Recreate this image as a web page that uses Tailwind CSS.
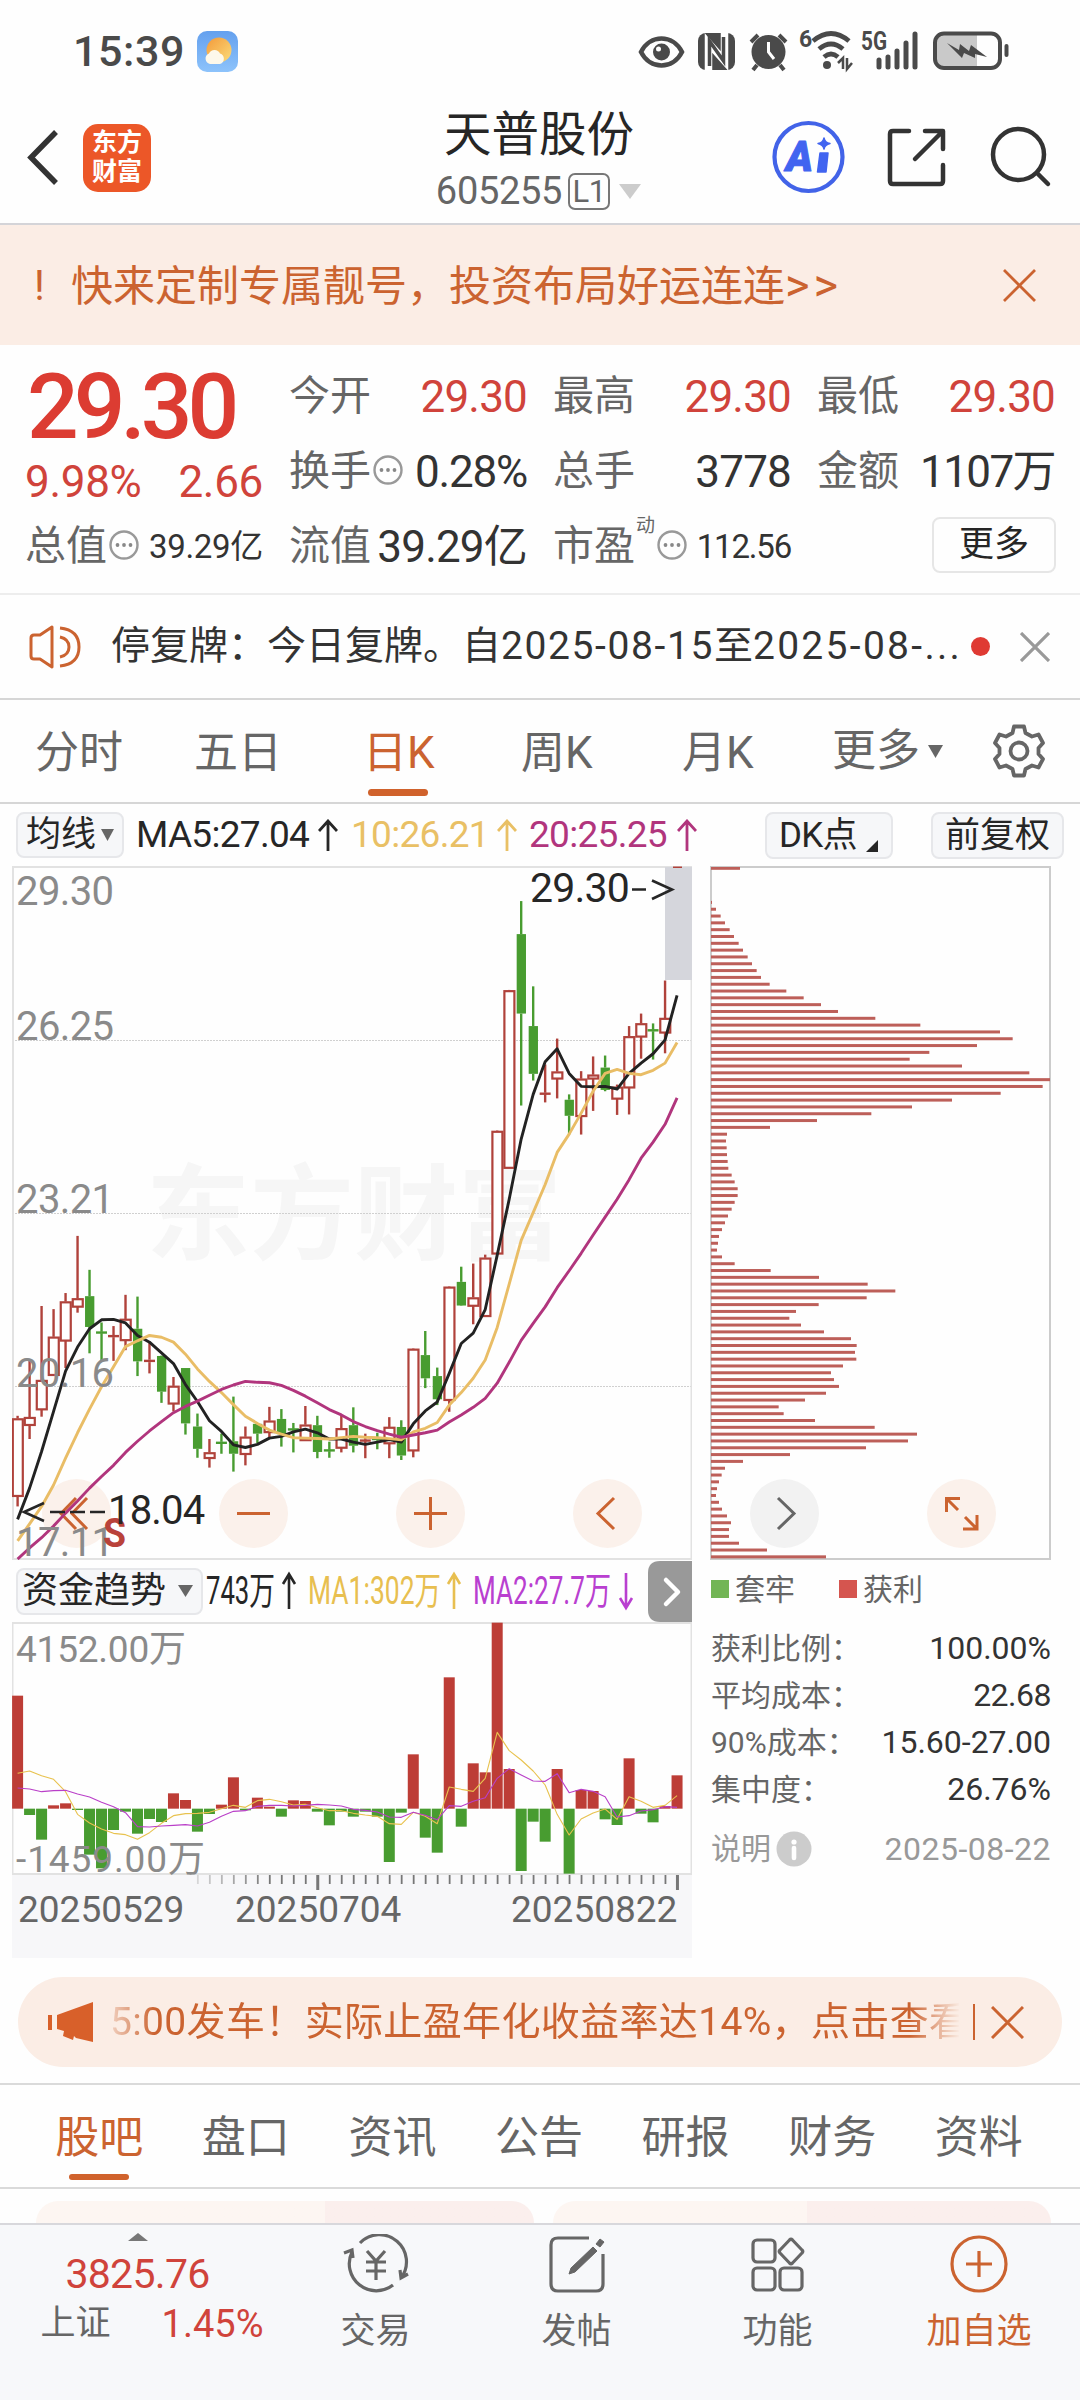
<!DOCTYPE html>
<html lang="zh-CN">

<head>
  <meta charset="UTF-8">
  <meta name="viewport" content="width=device-width, initial-scale=1.0">
  <title>天普股份 605255</title>
  <script src="https://cdn.jsdelivr.net/npm/@tailwindcss/browser@4"></script>
</head>

<body class="bg-white">
  <div class="w-[1080px] h-[2400px] overflow-hidden flex flex-col bg-[#fefefe] text-[#333] whitespace-nowrap font-['Roboto','Noto_Sans_CJK_SC',sans-serif]">

    <!-- Status bar -->
    <div class="h-[104px] shrink-0 flex items-start justify-between pl-[73px] pr-[60px] pt-5">
      <div class="flex items-center h-[62px] gap-[13px]">
        <span class="w-[111px] text-[43px] leading-[62px] font-medium text-[#4a4a4a] tracking-[0.6px]">15:39</span>
        <svg class="w-[41px] h-[41px]" viewBox="0 0 41 41">
          <defs>
            <linearGradient id="sky" x1="0" y1="0" x2="0" y2="1"><stop offset="0" stop-color="#64a0ee"/><stop offset="1" stop-color="#8dc3fb"/></linearGradient>
            <linearGradient id="sun" x1="0" y1="0" x2="1" y2="1"><stop offset="0" stop-color="#f39a3a"/><stop offset="1" stop-color="#fbdc7a"/></linearGradient>
          </defs>
          <rect width="41" height="41" rx="10" fill="url(#sky)"/>
          <circle cx="22" cy="19" r="12.500" fill="url(#sun)"/>
          <path d="M13 33a5.500 5.500 0 0 1-1-10.500 6 6 0 0 1 11 0 5.500 5.500 0 0 1 0 10.500z" fill="#fdf8ea"/>
        </svg>
      </div>
      <svg class="w-[390px] h-[62px]" viewBox="630 20 390 62" fill="none" stroke="#4a4a4a">
        <path d="M641 52C650 34 673 34 682 52C673 70 650 70 641 52Z" stroke-width="4.500"/>
        <circle cx="661.500" cy="52" r="8.500" fill="#4a4a4a" stroke="none"/>
        <circle cx="658.500" cy="49" r="2.500" fill="#fff" stroke="none"/>
        <rect x="698" y="33" width="37" height="37" rx="8" fill="#4a4a4a" stroke="none"/>
        <path d="M708.500 71V43L724.500 61V32" stroke="#fff" stroke-width="7.500"/>
        <path d="M709.500 66V41L723.500 61V37" stroke-width="3.500"/>
        <circle cx="768.500" cy="52" r="17" fill="#4a4a4a" stroke="none"/>
        <path d="M751 42L758 35M786 42L779 35M757 65L753 70M780 65L784 70" stroke-width="4"/>
        <path d="M768.500 42V52L774 59" stroke="#fff" stroke-width="3"/>
        <path d="M813 41Q831 26 849 41M819 49Q831 39 843 49M824 57Q831 51 838 57" stroke-width="4.800"/>
        <circle cx="827" cy="65" r="4" fill="#4a4a4a" stroke="none"/>
        <path d="M838 63L843 58V69M847 58V69L852 63" stroke-width="2.500"/>
        <text x="799" y="47" font-size="23" font-weight="700" fill="#4a4a4a" stroke="none">6</text>
        <text x="861" y="50" font-size="26" font-weight="700" fill="#4a4a4a" stroke="none" textLength="26" lengthAdjust="spacingAndGlyphs">5G</text>
        <path d="M879 60V67M888 57V67M897 51V67M906 43V67M915 34V67" stroke-width="5" stroke-linecap="round"/>
        <path d="M944 34H977V67H944Q936 67 936 59V42Q936 34 944 34Z" fill="#c9c9c9" stroke="none"/>
        <rect x="935" y="33.500" width="65" height="34.500" rx="9" stroke-width="4"/>
        <path d="M947 43L959 50L960 44L969 51L971 45L987 57L975 54L975 58L964 53L962 58Z" fill="#4a4a4a" stroke="none"/>
        <path d="M1006.500 46V55" stroke-width="4" stroke-linecap="round"/>
      </svg>
    </div>

    <!-- Header -->
    <header class="h-[121px] shrink-0 border-b-2 border-[#d4d4d8] flex justify-between">
      <div class="flex w-[330px] pl-[26px] pt-5">
        <svg class="w-8 h-[66px] mr-[25px]" viewBox="0 0 32 66" fill="none" stroke="#333" stroke-width="5.500"><path d="M30 8L5 33.500L30 59"/></svg>
        <div class="size-[68px] rounded-[15px] bg-[#ec5728] text-white text-[25px] leading-[29px] font-bold text-center pt-1">东方<br>财富</div>
      </div>
      <div class="w-[420px] flex flex-col items-center">
        <h1 class="text-[47.5px] leading-[62px] text-[#262626] pr-[2px]">天普股份</h1>
        <div class="flex items-center mt-[5px] pr-[3px] text-[38px] leading-[40px] text-[#666] tracking-[-0.3px]">
          605255
          <span class="w-[42px] h-[37px] ml-[6px] rounded-[7px] border-2 border-[#777] text-[31px] leading-[34px] text-center">L1</span>
          <svg class="w-[22px] h-[15px] ml-[9px]" viewBox="0 0 22 15"><path d="M0 0H22L11 15Z" fill="#ccc"/></svg>
        </div>
      </div>
      <svg class="w-[310px] h-[106px] ml-[20px]" viewBox="770 104 310 106" fill="none" stroke="#333" stroke-width="4.500" stroke-linecap="round" stroke-linejoin="round">
        <circle cx="808.500" cy="157" r="34" stroke="#4263e8" stroke-width="4.200"/>
        <text x="786" y="170.500" font-size="42" font-weight="900" font-style="italic" fill="#4164f0" stroke="#4164f0" stroke-width="1" textLength="27" lengthAdjust="spacingAndGlyphs">A</text>
        <path d="M820 153H828L826 172H817.500Z" fill="#4164f0" stroke="#4164f0" stroke-width="1.500"/>
        <path d="M824 138Q825 143 830 143.500Q825 144.500 824 149Q823 144.500 818 143.500Q823 143 824 138Z" fill="#4164f0" stroke="#4164f0" stroke-width="1.500"/>
        <path d="M909 131H893Q890 131 890 134V181Q890 184 893 184H940Q943 184 943 181V165M925 131H943V149M942 132L915 159"/>
        <circle cx="1018.500" cy="154.500" r="25.500"/><path d="M1038 174L1048 184"/>
      </svg>
    </header>

    <!-- Banner -->
    <div class="h-[120px] shrink-0 bg-[#fbede5] flex items-center pl-[26px] pr-[44px] text-[42px] text-[#cb6330]">
      <span class="w-[45px] pl-[8px]">!</span>
      <span class="flex-1">快来定制专属靓号，投资布局好运连连<span class="tracking-[4px] text-[47px]">&gt;&gt;</span></span>
      <svg class="size-[33px]" viewBox="0 0 33 33" stroke="#cb6330" stroke-width="2.800"><path d="M1 1L32 32M32 1L1 32"/></svg>
    </div>

    <!-- Quote -->
    <section class="h-[250px] shrink-0 border-b-2 border-[#ededed] pl-[25px] pt-[14px] flex gap-[26px] text-[44px] text-[#333] tracking-[-0.8px]">
      <div class="w-[238px]">
        <div class="h-[97px] text-[91px] leading-[97px] font-medium text-[#dc3c32] tracking-[-5px] pl-0.5">29.30</div>
        <div class="h-[53px] leading-[53px] text-[44px] flex justify-between text-[#d0433b] tracking-[-0.3px]"><span>9.98%</span><span>2.66</span></div>
        <div class="h-[75px] flex items-center">
          <span class="text-[41px] text-[#666] tracking-normal">总值</span>
          <svg class="size-[30px] ml-0.5 -mt-1" viewBox="0 0 30 30"><circle cx="15" cy="15" r="13.500" fill="none" stroke="#999" stroke-width="2.400"/><g fill="#888"><circle cx="8.500" cy="15" r="1.900"/><circle cx="15" cy="15" r="1.900"/><circle cx="21.500" cy="15" r="1.900"/></g></svg>
          <span class="ml-auto text-[33px] tracking-[-0.3px]">39.29亿</span>
        </div>
      </div>
      <div class="w-[238px]">
        <div class="h-[75px] flex items-center justify-between"><span class="text-[41px] text-[#666] tracking-normal">今开</span><span class="text-[#d0433b]">29.30</span></div>
        <div class="h-[75px] flex items-center">
          <span class="text-[41px] text-[#666] tracking-normal">换手</span>
          <svg class="size-[30px] ml-0.5 -mt-1" viewBox="0 0 30 30"><circle cx="15" cy="15" r="13.500" fill="none" stroke="#999" stroke-width="2.400"/><g fill="#888"><circle cx="8.500" cy="15" r="1.900"/><circle cx="15" cy="15" r="1.900"/><circle cx="21.500" cy="15" r="1.900"/></g></svg>
          <span class="ml-auto tracking-[-1.2px]">0.28%</span>
        </div>
        <div class="h-[75px] flex items-center justify-between"><span class="text-[41px] text-[#666] tracking-normal">流值</span><span>39.29亿</span></div>
      </div>
      <div class="w-[238px]">
        <div class="h-[75px] flex items-center justify-between"><span class="text-[41px] text-[#666] tracking-normal">最高</span><span class="text-[#d0433b]">29.30</span></div>
        <div class="h-[75px] flex items-center justify-between"><span class="text-[41px] text-[#666] tracking-normal">总手</span><span>3778</span></div>
        <div class="h-[75px] flex items-center">
          <span class="text-[41px] text-[#666] tracking-normal">市盈</span>
          <span class="w-[22px] text-[19px] text-[#666] self-start leading-[34px] pl-px">动</span>
          <svg class="size-[30px] -mt-1" viewBox="0 0 30 30"><circle cx="15" cy="15" r="13.500" fill="none" stroke="#999" stroke-width="2.400"/><g fill="#888"><circle cx="8.500" cy="15" r="1.900"/><circle cx="15" cy="15" r="1.900"/><circle cx="21.500" cy="15" r="1.900"/></g></svg>
          <span class="ml-auto text-[33px] tracking-[-1.2px]">112.56</span>
        </div>
      </div>
      <div class="w-[238px]">
        <div class="h-[75px] flex items-center justify-between"><span class="text-[41px] text-[#666] tracking-normal">最低</span><span class="text-[#d0433b]">29.30</span></div>
        <div class="h-[75px] flex items-center justify-between"><span class="text-[41px] text-[#666] tracking-normal">金额</span><span class="tracking-[-1.600px]">1107万</span></div>
        <div class="h-[75px] flex items-center justify-end -mr-px pb-1"><span class="w-[124px] h-[56px] rounded-lg border-2 border-[#e6e6e6] text-[35px] leading-[52px] text-center text-[#262626] tracking-normal">更多</span></div>
      </div>
    </section>

    <!-- Notice -->
    <div class="h-[105px] shrink-0 border-b-2 border-[#d6d6d6] flex items-center pl-[28px] pr-[30px] text-[39px]">
      <svg class="w-[54px] h-[46px] mr-[29px]" viewBox="0 0 54 46" fill="none" stroke="#cb6330" stroke-width="3">
        <path d="M24 3L12 11H6Q3 11 3 14V32Q3 35 6 35H12L24 43Z" stroke-linejoin="round"/>
        <path d="M32 13Q41 15 41 23Q41 31 32 33M32 4Q51 6 51 23Q51 40 32 42"/>
      </svg>
      <span class="w-[849px]">停复牌：今日复牌。自<span class="tracking-[1.600px]">2025-08-15</span>至<span class="tracking-[2.300px]">2025-08-...</span></span>
      <span class="size-[19px] rounded-full bg-[#df3a33] ml-[11px]"></span>
      <svg class="size-[30px] ml-auto" viewBox="0 0 30 30" stroke="#999" stroke-width="3.200"><path d="M1 1L29 29M29 1L1 29"/></svg>
    </div>

    <!-- Period tabs -->
    <nav class="h-[104px] shrink-0 border-b-2 border-[#d6d6d6] flex text-[44px] leading-[106px] text-[#666] pl-[35px] pr-[34px]">
      <span class="w-[159px]">分时</span>
      <span class="w-[169px]">五日</span>
      <span class="w-[158px] text-[#cb6330] flex flex-col"><span class="h-[89px]">日K</span><span class="w-[60px] h-[7px] rounded-full bg-[#d0622c] ml-[5px]"></span></span>
      <span class="w-[161px]">周K</span>
      <span class="w-[150px]">月K</span>
      <span class="flex items-center">更多<svg class="w-[15px] h-[13px] ml-[8px]" viewBox="0 0 15 13"><path d="M0 0H15L7.500 13Z" fill="#666"/></svg></span>
      <svg class="w-[54px] h-[54px] ml-auto mt-[24px]" viewBox="0 0 54 54" fill="none" stroke="#666" stroke-width="3.800" stroke-linejoin="round">
        <path d="M22 2.500H32L33.500 9L40 12.500L46.500 10.500L51 19L46.500 24V30L51 35L46.500 43.500L40 41.500L33.500 45L32 51.500H22L20.500 45L14 41.500L7.500 43.500L3 35L7.500 30V24L3 19L7.500 10.500L14 12.500L20.500 9Z"/>
        <circle cx="27" cy="27" r="8.500"/>
      </svg>
    </nav>

    <!-- Indicator row -->
    <div class="h-[62px] shrink-0 flex items-center pl-4 pr-4 text-[37px] tracking-[-0.7px]">
      <span class="w-[108px] h-[46px] rounded-lg border-2 border-[#e6e7ea] bg-[#f6f7f9] text-[35px] leading-[42px] pl-[8px] flex items-center text-[#262626] tracking-normal">均线<svg class="w-[13px] h-[12px] ml-[5px]" viewBox="0 0 13 12"><path d="M0 0H13L6.500 12Z" fill="#666"/></svg></span>
      <span class="w-[216px] pl-[12px] flex items-center text-[#262626]"><span class="w-[182px]">MA5:27.04</span><svg class="w-[20px] h-[32px]" viewBox="0 0 20 32" fill="none" stroke="currentColor" stroke-width="2.800"><path d="M10 32V2M1 12L10 2L19 12"/></svg></span>
      <span class="w-[177px] pl-[11px] flex items-center text-[#e9c065]"><span class="w-[146px]">10:26.21</span><svg class="w-[20px] h-[32px]" viewBox="0 0 20 32" fill="none" stroke="currentColor" stroke-width="2.800"><path d="M10 32V2M1 12L10 2L19 12"/></svg></span>
      <span class="pl-[12px] flex items-center text-[#b1357d]"><span class="w-[148px]">20:25.25</span><svg class="w-[20px] h-[32px]" viewBox="0 0 20 32" fill="none" stroke="currentColor" stroke-width="2.800"><path d="M10 32V2M1 12L10 2L19 12"/></svg></span>
      <span class="ml-auto w-[128px] h-[47px] rounded-lg border-2 border-[#e6e7ea] bg-[#f6f7f9] text-[35px] leading-[43px] pl-[12px] flex items-center text-[#262626]">DK点<svg class="w-[12px] h-[12px] ml-[9px] mt-[22px]" viewBox="0 0 12 12"><path d="M12 0V12H0Z" fill="#262626"/></svg></span>
      <span class="ml-[38px] w-[133px] h-[47px] rounded-lg border-2 border-[#e6e7ea] bg-[#f6f7f9] text-[35px] leading-[43px] text-center text-[#262626] tracking-normal">前复权</span>
    </div>

    <!-- Charts -->
    <section class="relative h-[1092px] shrink-0 flex pl-3">
      <!-- Chart buttons -->
      <div class="absolute left-[42px] top-[613px] flex gap-[108px]">
        <svg class="size-[69px]" viewBox="0 0 69 69" fill="none" stroke="#cb6330" stroke-width="3"><circle cx="34.500" cy="34.500" r="34.500" fill="#fbf1eb" stroke="none"/><path d="M34 19L19 34.500L34 50M45 19L30 34.500L45 50"/></svg>
        <svg class="size-[69px]" viewBox="0 0 69 69" fill="none" stroke="#cb6330" stroke-width="3"><circle cx="34.500" cy="34.500" r="34.500" fill="#fbf1eb" stroke="none"/><path d="M18 34.500H51"/></svg>
        <svg class="size-[69px]" viewBox="0 0 69 69" fill="none" stroke="#cb6330" stroke-width="3"><circle cx="34.500" cy="34.500" r="34.500" fill="#fbf1eb" stroke="none"/><path d="M18 34.500H51M34.500 18V51"/></svg>
        <svg class="size-[69px]" viewBox="0 0 69 69" fill="none" stroke="#cb6330" stroke-width="3"><circle cx="34.500" cy="34.500" r="34.500" fill="#fbf1eb" stroke="none"/><path d="M41 19L25 34.500L41 50"/></svg>
        <svg class="size-[69px]" viewBox="0 0 69 69" fill="none" stroke="#666" stroke-width="3"><circle cx="34.500" cy="34.500" r="34.500" fill="#f2f2f2" stroke="none"/><path d="M28 19L44 34.500L28 50"/></svg>
        <svg class="size-[69px]" viewBox="0 0 69 69" fill="none" stroke="#cb6330" stroke-width="3"><circle cx="34.500" cy="34.500" r="34.500" fill="#fbf1eb" stroke="none"/><path d="M19.500 33V19.500H33M20 20L31 31M36 50H50V36M49.500 49.500L38 38"/></svg>
      </div>

      <div class="relative w-[680px] flex flex-col">
        <svg id="kline" class="w-[680px] h-[694px]" viewBox="12 866 680 694"></svg>
        <div class="h-[62px] flex items-center pl-[4px]">
          <span class="w-[187px] h-[47px] rounded-lg border-2 border-[#e6e7ea] bg-[#f6f7f9] text-[36px] leading-[43px] pl-[4px] flex items-center text-[#262626]">资金趋势<svg class="w-[15px] h-[12px] ml-[12px]" viewBox="0 0 15 12"><path d="M0 0H15L7.500 12Z" fill="#666"/></svg></span>
          <svg class="w-[445px] h-[62px]" viewBox="203 1560 445 62" font-size="38" fill="none" stroke-width="2.600">
            <text x="206" y="1604" textLength="69" lengthAdjust="spacingAndGlyphs" fill="#262626">743万</text>
            <text x="308" y="1604" textLength="133" lengthAdjust="spacingAndGlyphs" fill="#e8bf50">MA1:302万</text>
            <text x="473" y="1604" textLength="138" lengthAdjust="spacingAndGlyphs" fill="#b93fd0">MA2:27.7万</text>
            <path d="M289 1609V1574M283 1584L289 1574L295 1584" stroke="#262626"/>
            <path d="M454 1609V1574M448 1584L454 1574L460 1584" stroke="#e8bf50"/>
            <path d="M626 1573V1607M620 1598L626 1608L632 1598" stroke="#b93fd0"/>
          </svg>
          <svg class="w-[44px] h-[61px]" viewBox="0 0 44 61"><path d="M44 0H12Q0 0 0 12V49Q0 61 12 61H44Z" fill="#999"/><path d="M18 19L30 31L18 43" fill="none" stroke="#fff" stroke-width="4.500" stroke-linecap="round" stroke-linejoin="round"/></svg>
        </div>
        <svg id="flow" class="w-[680px] h-[336px]" viewBox="12 1622 680 336"></svg>
      </div>

      <div class="relative ml-[18px] w-[341px] flex flex-col">
        <svg id="chips" class="w-[341px] h-[694px]" viewBox="710 866 341 694"></svg>
        <div class="h-[58px] flex items-center text-[30px] text-[#666] pl-px">
          <span class="size-[18px] bg-[#72b555]"></span><span class="ml-[6px] w-[104px]">套牢</span>
          <span class="size-[18px] bg-[#d5554f]"></span><span class="ml-[6px]">获利</span>
        </div>
        <dl class="text-[30px] leading-[47px] text-[#666] pl-px pt-[7px]">
          <div class="flex justify-between"><dt>获利比例：</dt><dd class="text-[32px] text-[#333]">100.00%</dd></div>
          <div class="flex justify-between"><dt>平均成本：</dt><dd class="text-[32px] text-[#333] tracking-[-0.5px]">22.68</dd></div>
          <div class="flex justify-between"><dt>90%成本：</dt><dd class="text-[32px] text-[#333]">15.60-27.00</dd></div>
          <div class="flex justify-between"><dt>集中度：</dt><dd class="text-[32px] text-[#333]">26.76%</dd></div>
        </dl>
        <div class="flex items-center mt-[12px] pl-px h-[47px] text-[30px] text-[#999]">
          说明<svg class="size-[36px] ml-[5px]" viewBox="0 0 36 36"><circle cx="18" cy="18" r="17.500" fill="#ccc"/><circle cx="18" cy="11" r="2.600" fill="#fff"/><path d="M18 17V27" stroke="#fff" stroke-width="4.600" stroke-linecap="round"/></svg>
          <span class="ml-auto text-[32px] tracking-[0.5px]">2025-08-22</span>
        </div>
      </div>
    </section>

    <!-- Promo -->
    <div class="h-[90px] shrink-0 mt-[19px] mx-[18px] rounded-full bg-[#fbede5] flex items-center pl-[30px] pr-[38px] text-[39px] tracking-[0.35px] text-[#cb6330]">
      <svg class="w-[45px] h-[40px] mr-[17px]" viewBox="0 0 45 40" fill="#d8602a"><path d="M0 13H4V28H0ZM9 13L45 0V40L28 36L26 34L25 38L15 34L16 29L9 27Z"/></svg>
      <span class="w-[849px] overflow-hidden [mask-image:linear-gradient(to_right,rgba(0,0,0,0.2),#000_45px,#000_800px,transparent_850px)]">5:00发车！实际止盈年化收益率达14%，点击查看</span>
      <span class="w-[2px] h-[36px] bg-[#cb6330] ml-[14px] mr-auto"></span>
      <svg class="size-[33px]" viewBox="0 0 33 33" stroke="#cb6330" stroke-width="3"><path d="M1 1L32 32M32 1L1 32"/></svg>
    </div>

    <!-- Content tabs -->
    <nav class="h-[106px] shrink-0 mt-[16px] border-y-2 border-[#dadada] flex pl-[26px] pr-[28px] text-[44px] leading-[106px] text-center text-[#666]">
      <span class="flex-1 text-[#cb6330] flex flex-col items-center"><span class="h-[89px]">股吧</span><span class="w-[60px] h-[6px] rounded-full bg-[#d0622c]"></span></span>
      <span class="flex-1">盘口</span>
      <span class="flex-1">资讯</span>
      <span class="flex-1">公告</span>
      <span class="flex-1">研报</span>
      <span class="flex-1">财务</span>
      <span class="flex-1">资料</span>
    </nav>
    <div class="h-[34px] shrink-0 flex gap-[19px] pl-9 pt-[12px]">
      <span class="w-[498px] rounded-t-[26px] bg-linear-to-r from-[#fdf6f2] from-58% to-[#fbefed] to-58%"></span>
      <span class="w-[498px] rounded-t-[26px] bg-linear-to-r from-[#fdf6f2] from-51% to-[#fbefed] to-51%"></span>
    </div>

    <!-- Bottom bar -->
    <footer class="flex-1 border-t-2 border-[#d8d8dc] bg-[#f7f8fa] flex text-[35px] text-[#666]">
      <div class="w-[275px] flex flex-col items-center pt-2">
        <svg class="w-[20px] h-[8px]" viewBox="0 0 20 8"><path d="M0 8H20L10 0Z" fill="#777"/></svg>
        <span class="text-[41px] leading-[50px] mt-[8px] text-[#d0433b] tracking-[-0.7px]">3825.76</span>
        <span class="flex items-center leading-[50px] w-[223px] justify-between ml-[29px]"><span>上证</span><span class="text-[38px] text-[#d0433b]">1.45%</span></span>
      </div>
      <div class="w-[201px] flex flex-col items-center pt-[9px]">
        <svg class="w-[66px] h-[60px]" viewBox="0 0 66 60" fill="none" stroke="#666" stroke-width="3.200">
          <path d="M17 9A27 27 0 0 1 58 44M50 51A27 27 0 0 1 9 18M1 19L9 16L10 24M57 36L58 44L65 40"/>
          <path d="M24 17L33 27L42 17M33 27V46M23 28H43M23 37H43"/>
        </svg>
        <span class="leading-[50px] mt-[13px]">交易</span>
      </div>
      <div class="w-[201px] flex flex-col items-center pt-[9px]">
        <svg class="w-[60px] h-[60px]" viewBox="0 0 60 60" fill="none" stroke="#666" stroke-width="3.200">
          <path d="M42 4H11Q4 4 4 11V50Q4 57 11 57H49Q56 57 56 50V20"/>
          <path d="M46 13L50 17L28 38L22 40L24 34ZM49 10L53 5L57 8L53 13Z" fill="#666" stroke-width="1"/>
        </svg>
        <span class="leading-[50px] mt-[13px]">发帖</span>
      </div>
      <div class="w-[201px] flex flex-col items-center pt-[9px]">
        <svg class="w-[60px] h-[60px]" viewBox="0 0 60 60" fill="none" stroke="#666" stroke-width="3.200">
          <rect x="5" y="6" width="22" height="22" rx="4"/><rect x="5" y="34" width="22" height="22" rx="4"/><rect x="32" y="34" width="22" height="22" rx="4"/>
          <path d="M41.500 6Q43 4.500 44.500 6L54 16Q55.500 17.500 54 19L44.500 29Q43 30.500 41.500 29L32 19Q30.500 17.500 32 16Z"/>
        </svg>
        <span class="leading-[50px] mt-[13px]">功能</span>
      </div>
      <div class="w-[202px] flex flex-col items-center pt-[9px] text-[#cb6330]">
        <svg class="w-[60px] h-[60px]" viewBox="0 0 60 60" fill="none" stroke="#cb6330" stroke-width="3.200"><circle cx="30" cy="30" r="27"/><path d="M17 30H43M30 17V43"/></svg>
        <span class="leading-[50px] mt-[13px]">加自选</span>
      </div>
    </footer>
  </div>

  <script>
    const RED = '#b0423b', GREEN = '#489c30';
    const px = i => 17.6 + 11.99 * i;
    const ky = v => 860 + v / 2.24;
    const fy = v => 1550 + v / 3;
    const rect = (x, y, w, h, attrs) => `<rect x="${x}" y="${y}" width="${w}" height="${h}" ${attrs}/>`;
    const line = (x1, y1, x2, y2, attrs) => `<line x1="${x1}" y1="${y1}" x2="${x2}" y2="${y2}" ${attrs}/>`;
    const label = (x, y, s, attrs) => `<text x="${x}" y="${y}" ${attrs}>${s}</text>`;
    const poly = (data, y, color, w) =>
      `<polyline points="${data.map((v, i) => px(i) + ',' + y(v)).join(' ')}" fill="none" stroke="${color}" stroke-width="${w}" stroke-linejoin="round"/>`;

    // high, body top, body bottom, low, 1 = up
    const candles = [
      [1245,1251,1425,1448,1],[1122,1248,1266,1297,1],[999,1165,1231,1247,1],[1006,1068,1154,1155,1],[970,989,1077,1138,1],
      [842,982,1001,1014,1],[918,977,1046,1105,0],[1036,1056,1061,1120,0],[1044,1064,1069,1122,1],[974,1028,1076,1098,1],
      [978,1050,1123,1156,0],[1082,1119,1125,1150,1],[1110,1111,1191,1216,0],[1158,1178,1218,1235,1],[1138,1138,1262,1287,0],
      [1240,1269,1319,1339,0],[1297,1327,1340,1361,1],[1285,1303,1308,1330,0],[1202,1302,1330,1370,0],[1269,1292,1331,1356,1],
      [1262,1263,1285,1306,0],[1225,1256,1282,1295,1],[1230,1252,1286,1314,0],[1261,1273,1278,1327,0],[1223,1265,1300,1300,1],
      [1245,1266,1326,1340,0],[1303,1320,1325,1339,0],[1243,1273,1317,1327,1],[1226,1266,1312,1327,0],[1285,1298,1303,1340,1],
      [1283,1294,1300,1320,0],[1248,1270,1307,1340,1],[1255,1270,1334,1344,0],[1094,1095,1323,1338,1],[1055,1109,1161,1183,0],
      [1137,1156,1208,1221,0],[955,956,1210,1236,1],[911,945,998,999,0],[904,980,999,1040,1],[884,891,1022,1022,1],
      [606,607,882,882,1],[291,292,690,690,1],[92,166,344,550,0],[283,372,479,494,0],[458,521,526,543,1],
      [400,474,490,534,1],[525,537,573,615,0],[473,490,574,615,1],[440,481,490,562,1],[438,465,515,518,0],
      [503,508,535,571,1],[372,395,510,570,1],[344,366,396,445,1],[366,379,384,447,0],[270,354,387,433,1]
    ];
    const ma5 = [1477,1407,1325,1235,1145,1091,1050,1030,1029,1037,1065,1080,1104,1128,1175,1213,1256,1280,1310,1316,1309,1295,1291,1281,1275,1283,1297,1297,1304,1309,1304,1298,1304,1263,1234,1214,1150,1083,1060,1007,885,760,625,525,452,423,478,507,508,507,513,478,455,434,403,303];
    const ma10 = [1525,1487,1448,1400,1340,1283,1230,1180,1135,1090,1077,1065,1069,1080,1107,1140,1168,1193,1220,1246,1262,1277,1286,1294,1295,1296,1297,1294,1291,1293,1294,1296,1299,1281,1273,1260,1221,1193,1161,1120,1047,950,852,790,727,655,614,567,518,478,469,478,481,471,455,409];
    const ma20 = [1566,1541,1518,1492,1463,1436,1407,1381,1356,1327,1302,1279,1258,1238,1224,1212,1199,1186,1176,1168,1170,1171,1177,1188,1201,1216,1231,1243,1258,1269,1278,1286,1293,1288,1283,1277,1259,1243,1226,1206,1172,1125,1076,1038,1001,958,920,881,840,800,760,716,668,632,592,533];

    let k = label(146, 1252, '东方财富', 'font-size="104" font-weight="700" fill="#f6f6f6"');
    [1040.5, 1213.5, 1386.5].forEach(y => k += line(12, y, 692, y, 'stroke="#d0d0d0" stroke-width="1" stroke-dasharray="2 1"'));
    k += rect(13, 867, 678.5, 692, 'fill="none" stroke="#e2e2e2" stroke-width="2"');
    k += rect(665, 867, 27, 113, 'fill="#d5d6dc"') + rect(673, 866.5, 9, 1.5, 'fill="#b0423b"');
    candles.forEach(([hi, top, bot, lo, up], i) => {
      const x = px(i), c = up ? RED : GREEN, t = ky(top), b = ky(bot);
      k += line(x, ky(hi), x, t, `stroke="${c}" stroke-width="2.4"`) + line(x, b, x, ky(lo), `stroke="${c}" stroke-width="2.4"`);
      if (bot - top < 8) k += line(x - 5.5, (t + b) / 2, x + 5.5, (t + b) / 2, `stroke="${c}" stroke-width="2.4"`) + line(x, t, x, b, `stroke="${c}" stroke-width="2.4"`);
      else if (up) k += rect(x - 4.8, t + 0.8, 10, Math.max(b - t - 1, 3), `fill="#fff" stroke="${c}" stroke-width="2.2"`);
      else k += rect(x - 4.5, t, 9.3, b - t, `fill="${c}"`);
    });
    k += poly(ma5, ky, '#222', 2.9) + poly(ma10, ky, '#e9bd66', 2.9) + poly(ma20, ky, '#b1357d', 2.9);
    [['29.30', 904.5], ['26.25', 1039.5], ['23.21', 1212.5], ['20.16', 1387], ['17.11', 1556]].forEach(([s, y]) =>
      k += label(16, y, s, 'font-size="40" fill="#8a8a8a" letter-spacing="-0.6"'));
    k += label(530, 902, '29.30', 'font-size="41" fill="#262626" letter-spacing="-0.8"');
    k += '<path d="M632 889.5H646M652 880.5L672 889.5L652 899" fill="none" stroke="#262626" stroke-width="2.6"/>';
    k += '<path d="M44 1503L24 1512L44 1521M50 1512H65M70 1512H85M90 1512H105" fill="none" stroke="#262626" stroke-width="2.6"/>';
    k += label(103, 1547, 'S', 'font-size="40" font-weight="700" fill="#b9423a" textLength="23" lengthAdjust="spacingAndGlyphs"');
    k += label(108, 1524, '18.04', 'font-size="40" fill="#262626" letter-spacing="-0.8"');
    document.getElementById('kline').innerHTML = k;

    // Fund flow, zero line at 776
    const flow = [437,795,869,766,760,780,914,955,840,785,851,807,816,730,750,845,792,764,682,781,743,770,800,751,753,785,826,785,800,785,800,936,788,613,863,908,382,830,640,667,218,657,963,815,875,657,971,720,723,808,825,625,791,817,768,676];
    const flow1 = [670,663,677,688,725,793,819,837,850,854,868,848,820,797,791,790,787,776,766,772,752,748,755,765,763,773,782,782,790,795,799,821,823,787,799,821,711,718,724,685,547,602,630,663,705,793,855,807,789,777,808,740,754,772,766,737];
    const flow2 = [714,717,725,722,721,732,741,757,770,788,830,831,828,826,824,828,817,799,784,782,769,766,766,768,766,763,765,768,778,781,786,801,802,787,796,809,767,769,754,743,685,656,675,693,694,671,728,718,724,740,801,797,783,779,770,772];
    let f = rect(12, 1874, 680, 84, 'fill="#f7f7f9"') + rect(12.5, 1623, 679, 251, 'fill="none" stroke="#e2e2e2" stroke-width="2"');
    flow.forEach((v, i) => f += rect(px(i) - 5.5, fy(Math.min(v, 776)), 11, Math.abs(v - 776) / 3, `fill="${v < 776 ? '#bd3d36' : '#489c30'}"`));
    f += poly(flow1, fy, '#e8c24e', 1.1) + poly(flow2, fy, '#b93fc8', 1.1);
    for (let i = 15; i <= 55; i++) {
      const long = i === 25 || i === 55;
      f += line(px(i) + 0.4, 1875, px(i) + 0.4, long ? 1890 : 1884, `stroke="#777" stroke-width="${long ? 3 : 1.8}" opacity="${Math.min(1, (i - 13) / 8)}"`);
    }
    f += label(16, 1662, '4152.00万', 'font-size="37" fill="#8a8a8a" textLength="170"');
    f += label(16, 1872, '-1459.00万', 'font-size="37" fill="#8a8a8a" textLength="189"');
    [[18, '20250529'], [235, '20250704'], [511, '20250822']].forEach(([x, s]) =>
      f += label(x, 1922, s, 'font-size="37" fill="#666"'));
    document.getElementById('flow').innerHTML = f;

    // Cost distribution
    const chips = [66,78,92,105,119,132,146,159,173,186,200,213,239,289,341,393,444,556,691,930,968,861,718,659,816,1018,1080,1058,932,786,666,544,381,240,
      111,108,110,111,113,115,125,134,143,143,134,125,114,105,96,87,84,81,96,134,242,387,533,616,530,386,318,298,333,402,
      483,500,495,499,459,423,432,447,408,345,266,281,375,554,681,654,528,300,159,105,95,87,81,78,87,96,111,123,117,117,147,231,408];
    let c = rect(711, 867, 339, 692, 'fill="none" stroke="#ccc" stroke-width="2"') + rect(711, 867, 29, 2.8, 'fill="#bd5f59"');
    chips.forEach((v, i) => c += rect(711, ky(95 + 15.27 * i) - 1.5, v / 3 - 21, 3, 'fill="#bd5f59"'));
    document.getElementById('chips').innerHTML = c;
  </script>
</body>

</html>
